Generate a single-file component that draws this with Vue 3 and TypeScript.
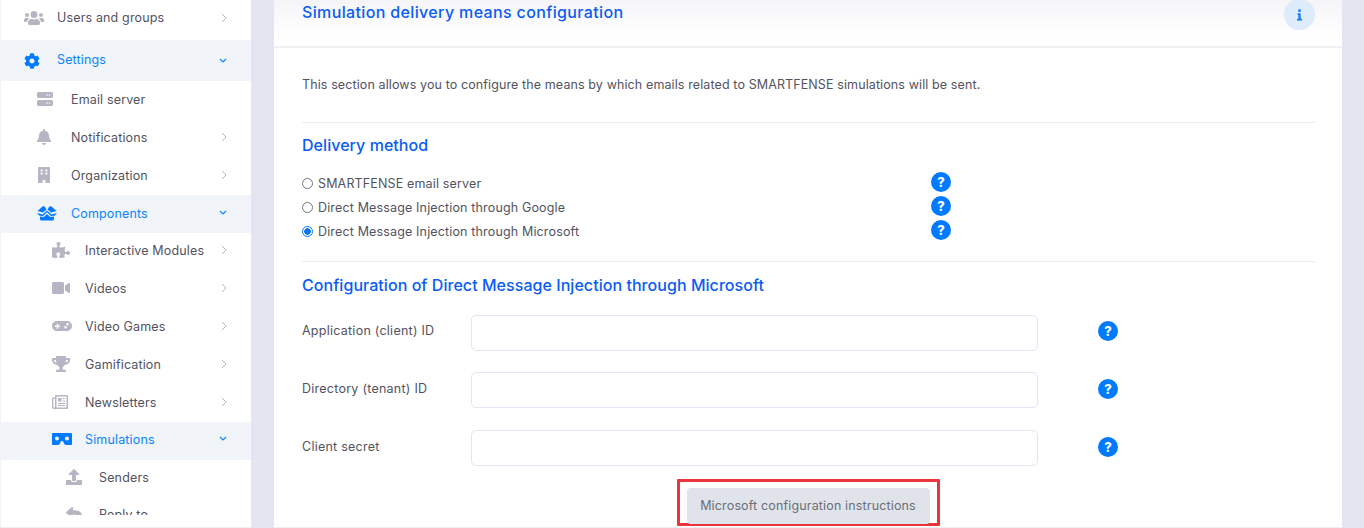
<script setup lang="ts">
interface Item { label: string; icon: string; level: number; state?: 'closed' | 'open' | 'none' }
const items: Item[] = [
  { label: 'Users and groups', icon: 'users', level: 0, state: 'closed' },
  { label: 'Settings', icon: 'cog', level: 0, state: 'open' },
  { label: 'Email server', icon: 'server', level: 1, state: 'none' },
  { label: 'Notifications', icon: 'bell', level: 1, state: 'closed' },
  { label: 'Organization', icon: 'building', level: 1, state: 'closed' },
  { label: 'Components', icon: 'box', level: 1, state: 'open' },
  { label: 'Interactive Modules', icon: 'puzzle', level: 2, state: 'closed' },
  { label: 'Videos', icon: 'video', level: 2, state: 'closed' },
  { label: 'Video Games', icon: 'gamepad', level: 2, state: 'closed' },
  { label: 'Gamification', icon: 'trophy', level: 2, state: 'closed' },
  { label: 'Newsletters', icon: 'news', level: 2, state: 'closed' },
  { label: 'Simulations', icon: 'vr', level: 2, state: 'open' },
  { label: 'Senders', icon: 'upload', level: 3, state: 'none' },
  { label: 'Reply to', icon: 'reply', level: 3, state: 'none' },
]
const icons: Record<string, { vb: string; w: number; d: string }> = {
  users: { vb: '0 0 640 512', w: 20, d: 'M96 224a64 64 0 1 0 0-128 64 64 0 0 0 0 128zm448 0a64 64 0 1 0 0-128 64 64 0 0 0 0 128zm32 32h-64c-17.600 0-33.500 7.100-45.100 18.600 40.300 22.100 68.900 62 75.100 109.400h66c17.700 0 32-14.300 32-32v-32c0-35.300-28.700-64-64-64zm-256 0a112 112 0 1 0 0-224 112 112 0 0 0 0 224zm76.800 32h-8.300c-20.800 10-43.900 16-68.500 16s-47.600-6-68.500-16h-8.300C179.600 288 128 339.600 128 403.200V432c0 26.500 21.500 48 48 48h288c26.500 0 48-21.500 48-48v-28.800c0-63.600-51.600-115.200-115.200-115.200zm-223.700-13.400C161.500 263.100 145.600 256 128 256H64c-35.300 0-64 28.700-64 64v32c0 17.700 14.300 32 32 32h65.900c6.300-47.400 34.900-87.300 75.200-109.400z' },
  cog: { vb: '0 0 512 512', w: 16, d: 'M487.4 315.7l-42.6-24.600c4.300-23.200 4.300-47 0-70.200l42.600-24.600c4.900-2.800 7.100-8.600 5.500-14-11.100-35.600-30-67.800-54.700-94.600-3.800-4.100-10-5.100-14.800-2.300L380.800 110c-17.900-15.400-38.500-27.300-60.800-35.100V25.800c0-5.600-3.900-10.500-9.400-11.700-36.700-8.200-74.300-7.800-109.200 0-5.500 1.200-9.400 6.100-9.400 11.700V75c-22.200 7.900-42.800 19.800-60.800 35.100L88.700 85.500c-4.900-2.800-11-1.900-14.800 2.300-24.700 26.700-43.600 58.900-54.700 94.600-1.700 5.400.6 11.200 5.500 14L67.300 221c-4.300 23.200-4.300 47 0 70.200l-42.600 24.600c-4.900 2.800-7.100 8.600-5.500 14 11.100 35.600 30 67.800 54.700 94.600 3.800 4.100 10 5.100 14.800 2.300l42.600-24.600c17.900 15.400 38.500 27.300 60.800 35.100v49.200c0 5.600 3.900 10.500 9.400 11.700 36.700 8.200 74.300 7.800 109.200 0 5.500-1.200 9.400-6.100 9.400-11.700v-49.200c22.200-7.900 42.800-19.800 60.800-35.100l42.600 24.600c4.900 2.800 11 1.900 14.800-2.300 24.700-26.700 43.600-58.900 54.700-94.600 1.500-5.500-.7-11.300-5.600-14.100zM256 336c-44.100 0-80-35.900-80-80s35.900-80 80-80 80 35.900 80 80-35.900 80-80 80z' },
  server: { vb: '0 0 16 16', w: 16, d: 'M1.500 1h13A1.500 1.500 0 0 1 16 2.500v3A1.500 1.500 0 0 1 14.500 7h-13A1.500 1.500 0 0 1 0 5.500v-3A1.500 1.500 0 0 1 1.500 1zm11 2.200a.8.8 0 1 0 0 1.600.8.8 0 0 0 0-1.600zm-2.500 0a.8.8 0 1 0 0 1.600.8.8 0 0 0 0-1.600zM1.500 9h13A1.500 1.500 0 0 1 16 10.500v3a1.500 1.500 0 0 1-1.500 1.500h-13A1.500 1.500 0 0 1 0 13.500v-3A1.500 1.500 0 0 1 1.500 9zm11 2.200a.8.8 0 1 0 0 1.600.8.8 0 0 0 0-1.600zm-2.500 0a.8.8 0 1 0 0 1.600.8.8 0 0 0 0-1.600z' },
  bell: { vb: '0 0 448 512', w: 14, d: 'M224 512c35.320 0 63.970-28.650 63.970-64H160.030c0 35.350 28.650 64 63.970 64zm215.390-149.710c-19.320-20.760-55.470-51.990-55.470-154.290 0-77.700-54.480-139.900-127.940-155.160V32c0-17.670-14.320-32-31.980-32s-31.980 14.330-31.980 32v20.840C118.560 68.100 64.080 130.300 64.080 208c0 102.300-36.150 133.530-55.470 154.290-6 6.450-8.660 14.160-8.610 21.710.11 16.400 12.980 32 32.100 32h383.800c19.120 0 32-15.600 32.100-32 .05-7.550-2.610-15.270-8.610-21.710z' },
  building: { vb: '0 0 448 512', w: 14, d: 'M32 24C32 10.700 42.700 0 56 0h336c13.300 0 24 10.700 24 24v488H272v-84c0-6.600-5.400-12-12-12h-72c-6.600 0-12 5.400-12 12v84H32zM128 76c-6.600 0-12 5.400-12 12v40c0 6.600 5.400 12 12 12h40c6.600 0 12-5.400 12-12V88c0-6.600-5.400-12-12-12zm0 96c-6.600 0-12 5.400-12 12v40c0 6.600 5.400 12 12 12h40c6.600 0 12-5.400 12-12v-40c0-6.600-5.400-12-12-12zm152-96c-6.600 0-12 5.400-12 12v40c0 6.600 5.400 12 12 12h40c6.600 0 12-5.400 12-12V88c0-6.600-5.400-12-12-12zm0 96c-6.600 0-12 5.400-12 12v40c0 6.600 5.400 12 12 12h40c6.600 0 12-5.400 12-12v-40c0-6.600-5.400-12-12-12z' },
  box: { vb: '0 0 20 16', w: 20, d: 'M.5 6L5.500 1.500Q7 .8 8 2L9.500 4.500 6 7.500zM19.500 6L14.500 1.500Q13 .8 12 2L10.500 4.500 14 7.500zM0 8L5.500 9.500 10 5.500 14.500 9.500 20 8 17.500 10.800 14 11 10 7.300 6 11 2.500 10.800zM3 11.500L6.800 12 10 9 13.200 12 17 11.500V14Q17 15.500 15.500 15.500H4.500Q3 15.500 3 14z' },
  puzzle: { vb: '0 0 576 512', w: 18, d: 'M519.442 288.651c-41.519 0-59.500 31.593-82.058 31.593C377.409 320.244 432 144 432 144s-196.288 80-196.288-3.297c0-35.827 36.288-46.250 36.288-85.985C272 19.216 243.885 0 210.539 0c-34.654 0-66.366 18.891-66.366 56.346 0 41.364 31.711 59.277 31.711 81.750C175.885 207.719 0 166.758 0 166.758v333.237s178.635 41.047 178.635-28.662c0-22.473-40-40.107-40-81.471 0-37.456 29.250-56.346 63.577-56.346 33.673 0 61.788 19.216 61.788 54.717 0 39.735-36.288 50.158-36.288 85.985 0 60.803 129.675 25.730 181.230 25.730 0 0-34.725-120.101 25.827-120.101 35.962 0 46.423 36.152 86.308 36.152C556.712 416 576 387.990 576 354.443c0-34.199-18.962-65.792-56.558-65.792z' },
  video: { vb: '0 0 576 512', w: 18, d: 'M336.200 64H47.800C21.400 64 0 85.400 0 111.800v288.400C0 426.600 21.400 448 47.800 448h288.400c26.400 0 47.800-21.400 47.800-47.800V111.800c0-26.400-21.400-47.800-47.800-47.800zm189.400 37.700L416 177.300v157.400l109.600 75.500c21.200 14.600 50.400-.3 50.400-25.800V127.500c0-25.400-29.100-40.400-50.400-25.800z' },
  gamepad: { vb: '0 0 640 512', w: 20, d: 'M480 96H160C71.600 96 0 167.600 0 256s71.600 160 160 160h320c88.400 0 160-71.600 160-160S568.400 96 480 96zM256 276c0 6.600-5.400 12-12 12h-44v44c0 6.600-5.400 12-12 12h-24c-6.600 0-12-5.400-12-12v-44h-44c-6.600 0-12-5.400-12-12v-24c0-6.600 5.400-12 12-12h44v-44c0-6.600 5.400-12 12-12h24c6.600 0 12 5.400 12 12v44h44c6.600 0 12 5.400 12 12zm176 60a40 40 0 1 1 0-80 40 40 0 0 1 0 80zm64-96a40 40 0 1 1 0-80 40 40 0 0 1 0 80z' },
  trophy: { vb: '0 0 576 512', w: 18, d: 'M552 64H448V24c0-13.300-10.700-24-24-24H152c-13.300 0-24 10.700-24 24v40H24C10.700 64 0 74.700 0 88v56c0 35.700 22.500 72.400 61.900 100.700 31.500 22.700 69.800 37.100 110 41.700C203.300 338.500 240 360 240 360v72h-48c-35.300 0-64 20.700-64 56v12c0 6.600 5.400 12 12 12h296c6.600 0 12-5.400 12-12v-12c0-35.300-28.700-56-64-56h-48v-72s36.700-21.500 68.100-73.600c40.300-4.600 78.600-19 110-41.700 39.300-28.300 61.900-65 61.900-100.700V88c0-13.300-10.700-24-24-24zM99.300 192.800C74.900 175.200 64 155.600 64 144v-16h64.200c1 32.600 5.800 61.200 12.800 86.200-15.100-5.200-29.200-12.400-41.700-21.400zM512 144c0 16.100-17.700 36.100-35.300 48.800-12.500 9-26.700 16.200-41.800 21.400 7-25 11.800-53.600 12.800-86.200H512z' },
  news: { vb: '0 0 16 16', w: 16, d: 'M4 1h11a1 1 0 0 1 1 1v12a1 1 0 0 1-1 1H1.800A1.800 1.800 0 0 1 0 13.200V4.500a1 1 0 0 1 1-1h2V2a1 1 0 0 1 1-1zM1.300 4.800v8.400a.5.500 0 0 0 1 0c.3 0 .7 0 .7-.2V4.800zM4.500 2.500v11h10v-11zM6 4h3.500v3.500H6zM10.800 4H13v1h-2.200zM10.800 6.500H13v1h-2.200zM6 9h7v1H6zM6 11h7v1H6z' },
  vr: { vb: '0 0 640 512', w: 20, d: 'M608 64H32C14.330 64 0 78.330 0 96v320c0 17.670 14.330 32 32 32h160.220c25.170 0 48.070-14.760 58.300-37.760l27.740-62.470C285.600 331.300 302.100 320 320 320s34.400 11.300 41.740 27.770l27.740 62.470C399.710 433.240 422.610 448 447.780 448H608c17.670 0 32-14.330 32-32V96c0-17.670-14.330-32-32-32zM160 304c-35.350 0-64-28.650-64-64s28.650-64 64-64 64 28.650 64 64-28.650 64-64 64zm320 0c-35.350 0-64-28.650-64-64s28.650-64 64-64 64 28.650 64 64-28.650 64-64 64z' },
  upload: { vb: '0 0 512 512', w: 16, d: 'M296 384h-80c-13.300 0-24-10.700-24-24V192h-87.700c-17.800 0-26.700-21.500-14.100-34.100L242.300 5.700c7.500-7.500 19.800-7.500 27.300 0l152.200 152.200c12.600 12.600 3.700 34.100-14.100 34.100H320v168c0 13.300-10.700 24-24 24zm216-8v112c0 13.300-10.700 24-24 24H24c-13.300 0-24-10.700-24-24V376c0-13.300 10.700-24 24-24h136v8c0 30.900 25.100 56 56 56h80c30.900 0 56-25.100 56-56v-8h136c13.300 0 24 10.700 24 24z' },
  reply: { vb: '0 0 512 512', w: 16, d: 'M8.309 189.836L184.313 37.851C199.719 24.546 224 35.347 224 56.015v80.053c160.629 1.839 288 34.032 288 186.258 0 61.441-39.581 122.309-83.333 154.132-13.653 9.931-33.111-2.533-28.077-18.631 45.344-145.012-21.507-183.510-176.590-185.742V360c0 20.700-24.300 31.453-39.687 18.164l-176.004-152c-11.071-9.562-11.086-26.753 0-36.328z' },
}
const methods = [
  { label: 'SMARTFENSE email server', checked: false },
  { label: 'Direct Message Injection through Google', checked: false },
  { label: 'Direct Message Injection through Microsoft', checked: true },
]
const fields = ['Application (client) ID', 'Directory (tenant) ID', 'Client secret']
</script>

<template>
  <div class="page">
    <aside class="side">
      <nav class="nav">
        <a
          v-for="it in items"
          :key="it.label"
          class="item"
          :class="['lvl' + it.level, { open: it.state === 'open' }]"
        >
          <span class="ico">
            <svg :width="icons[it.icon].w" height="16" :viewBox="icons[it.icon].vb" fill="currentColor" fill-rule="evenodd"><path :d="icons[it.icon].d" /></svg>
          </span>
          <span class="lab">{{ it.label }}</span>
          <svg v-if="it.state === 'closed'" class="arrow" width="6" height="10" viewBox="0 0 6 10" fill="none" stroke="currentColor" stroke-width="1"><path d="M1 1l4 4-4 4" /></svg>
          <svg v-else-if="it.state === 'open'" class="arrow" width="8" height="6" viewBox="0 0 8 6" fill="none" stroke="currentColor" stroke-width="1.200"><path d="M1 1l3 3 3-3" /></svg>
        </a>
      </nav>
    </aside>

    <main class="card">
      <header class="head">
        <h1>Simulation delivery means configuration</h1>
        <span class="info">
          <svg width="5" height="12" viewBox="0 0 6 14" fill="currentColor"><circle cx="3" cy="1.800" r="1.700" /><path d="M.6 5h3.800v6.600H6V13.500H0v-1.900h1.700V6.800H.6z" /></svg>
        </span>
      </header>
      <section class="body">
        <p class="intro">This section allows you to configure the means by which emails related to SMARTFENSE simulations will be sent.</p>
        <hr />
        <h2 class="h-delivery">Delivery method</h2>
        <div class="methods">
          <div v-for="m in methods" :key="m.label" class="method">
            <label class="radio-wrap">
              <span class="radio" :class="{ on: m.checked }"></span>
              <span>{{ m.label }}</span>
            </label>
            <span class="q">?</span>
          </div>
        </div>
        <hr class="second" />
        <h2 class="h-config">Configuration of Direct Message Injection through Microsoft</h2>
        <div class="fields">
          <div v-for="f in fields" :key="f" class="field">
            <label>{{ f }}</label>
            <input type="text" />
            <span class="q">?</span>
          </div>
        </div>
        <div class="actions">
          <div class="mark"><button type="button">Microsoft configuration instructions</button></div>
        </div>
      </section>
    </main>
  </div>
</template>

<style>
html, body { margin: 0; background: #e3e6f0; }
</style>

<style scoped>
.page {
  display: flex;
  width: 1364px;
  height: 528px;
  overflow: hidden;
  background: #e3e6f0;
  font-family: Inter, "Noto Sans", sans-serif;
  font-size: 12.5px;
  letter-spacing: 0.15px;
  color: #53535f;
}
.side {
  width: 251px;
  height: 528px;
  box-sizing: border-box;
  border-left: 1px solid #f3f3f5;
  border-bottom: 1px solid #f0f0f3;
  background: #fff;
  flex: none;
}
.nav { height: 515px; overflow: hidden; }
.item {
  display: flex;
  align-items: center;
  height: 38px;
  box-sizing: border-box;
  padding-right: 24px;
  padding-bottom: 2px;
}
.item:nth-child(1) { height: 40px; padding-bottom: 6px; }
.item:nth-child(2) { height: 41px; }
.item:nth-child(7) { height: 37px; padding-bottom: 3px; }
.item:nth-child(12), .item:nth-child(13) { padding-bottom: 4px; }
.item:nth-child(14) { padding-bottom: 6px; }
.item:nth-child(-n+2) .ico, .item:nth-child(-n+2) .arrow { margin-top: 2px; }
.item.lvl0 { padding-left: 23px; }
.item.lvl1 { padding-left: 36px; }
.item.lvl2 { padding-left: 51px; }
.item.lvl3 { padding-left: 65px; }
.ico {
  width: 33px;
  flex: none;
  display: flex;
  color: #b5b5c3;
}
.lvl1 .ico { width: 34px; }
.lab { flex: 1; }
.arrow { color: #b5b5c3; flex: none; }
.open { background: #f1f4f8; }
.open .lab, .open .arrow { color: #0a84ff; }
.open .ico { color: #007bff; }

.card {
  width: 1068px;
  height: 528px;
  margin-left: 23px;
  background: #fff;
  flex: none;
  overflow: hidden;
  box-sizing: border-box;
  border-bottom: 1px solid #f0f0f3;
}
.head {
  height: 48px;
  box-sizing: border-box;
  border-bottom: 2px solid #eff0f3;
  background: linear-gradient(#f5f5f8, #fff 80%);
  padding: 0 27px 0 28px;
  display: flex;
  justify-content: space-between;
  align-items: flex-start;
}
h1, h2 {
  margin: 0;
  font-weight: 500;
  color: #0a5cf5;
  font-size: 16px;
  letter-spacing: 0.05px;
}
h1 { line-height: 25px; letter-spacing: 0.36px; }
.info {
  width: 31px;
  height: 31px;
  margin-top: -1px;
  border-radius: 50%;
  background: #deebfb;
  color: #0a7bff;
  display: flex;
  align-items: center;
  justify-content: center;
}
.body { padding: 0 27px 0 28px; }
.intro { margin: 0; padding-top: 28px; height: 46px; line-height: 18px; letter-spacing: 0.11px; }
hr { border: 0; border-top: 1px solid #ececf0; margin: 0; }
.h-delivery { margin-top: 12px; line-height: 20px; }
.methods { margin-top: 16px; }
.method {
  display: flex;
  align-items: center;
  height: 24.300px;
}
.radio-wrap { display: flex; align-items: center; gap: 5px; width: 629px; }
.radio {
  width: 9px;
  height: 9px;
  border: 1px solid #767676;
  border-radius: 50%;
  background: #fff;
}
.radio.on {
  border-color: #0a75f0;
  background: radial-gradient(circle, #0a75f0 3px, #fff 3.600px);
}
.q {
  width: 20px;
  height: 20px;
  border-radius: 50%;
  background: #007bff;
  color: #fff;
  font-weight: 800;
  font-size: 13px;
  letter-spacing: 0;
  line-height: 20px;
  text-align: center;
  flex: none;
}
.method .q { margin-bottom: 3px; }
.second { margin-top: 17px; }
.h-config { margin-top: 13px; line-height: 20px; }
.fields { margin-top: 20px; }
.field {
  display: flex;
  align-items: center;
  height: 36px;
  margin-bottom: 22px;
}
.field:first-child { margin-bottom: 21px; }
.field label { width: 169px; flex: none; margin-bottom: 2px; letter-spacing: 0.25px; }
.field .q { margin-bottom: 2px; }
.field:first-child label, .field:first-child .q { margin-bottom: 4px; }
.field input {
  width: 567px;
  height: 36px;
  box-sizing: border-box;
  border: 1px solid #e4e4f2;
  border-radius: 5px;
  background: #fff;
  margin-right: 60px;
  outline: 0;
}
.actions { display: flex; justify-content: center; margin-top: -9px; padding-right: 1px; }
.mark {
  border: 3px solid #e8343a;
  padding: 6px 7px 0;
  height: 47px;
  box-sizing: border-box;
  border-radius: 1px;
}
.mark button {
  width: 243px;
  height: 36px;
  border: 0;
  border-radius: 4px;
  background: #e0e4ea;
  color: #6b6e76;
  font: inherit;
  letter-spacing: 0.15px;
}
</style>
